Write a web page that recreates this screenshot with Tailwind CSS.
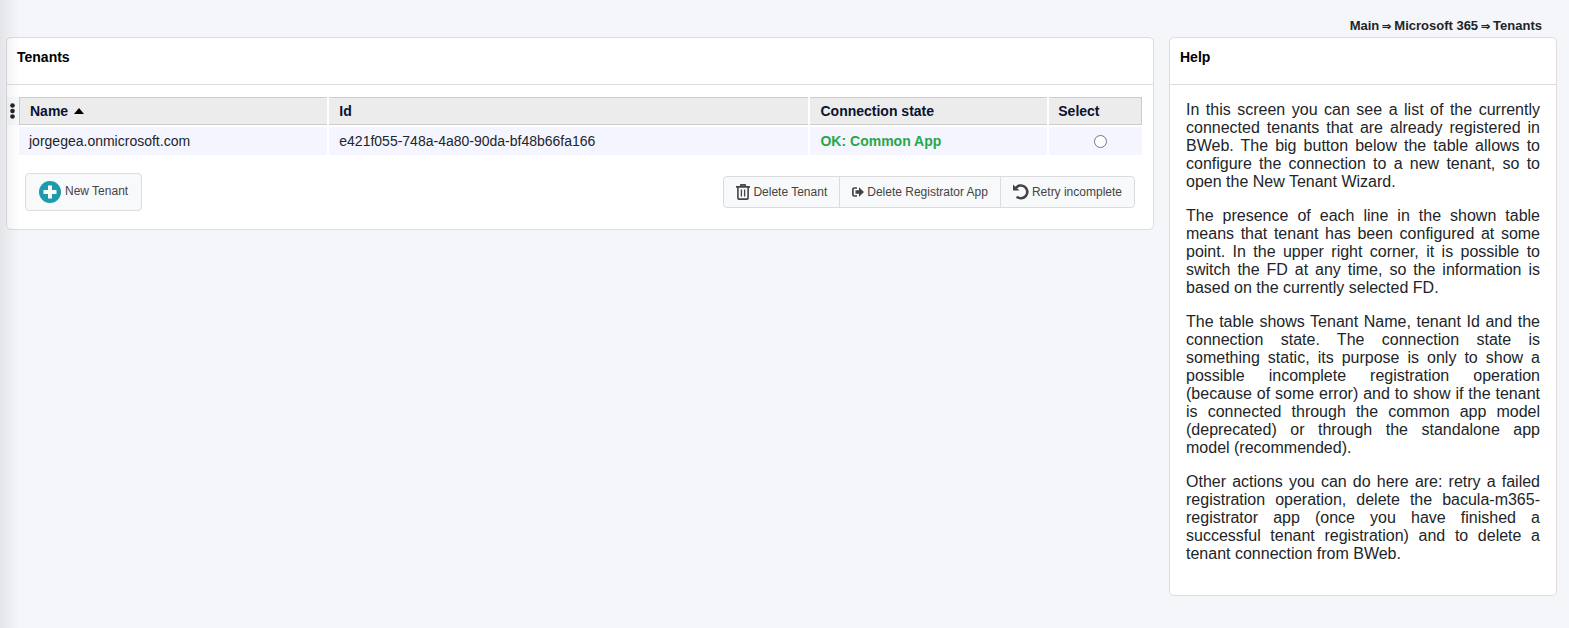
<!DOCTYPE html>
<html lang="en">
<head>
  <meta charset="UTF-8">
  <meta name="viewport" content="width=device-width, initial-scale=1.0">
  <title>Tenants</title>
  <script src="https://cdn.jsdelivr.net/npm/@tailwindcss/browser@4"></script>
</head>
<body class="relative min-h-screen bg-[#f4f6fa] pl-[6px] pr-3 pt-4 font-['Liberation_Sans',Arial,sans-serif] text-[#212529]">

  <!-- shadow cast by the sidebar -->
  <div class="absolute inset-y-0 left-0 w-5 bg-linear-to-r from-black/7 to-transparent pointer-events-none"></div>

  <nav class="flex justify-end gap-[3px] pr-[15px] pb-[1px] text-[13px] leading-5 font-bold" aria-label="Breadcrumb">
    <a href="#">Main</a>
    <span class="text-[11px]">⇒</span>
    <a href="#">Microsoft 365</a>
    <span class="text-[11px]">⇒</span>
    <a href="#">Tenants</a>
  </nav>

  <main class="flex items-start gap-[15px]">
    <section class="flex-1 min-w-0 bg-white border border-[#e0dbdd] rounded-[5px]">
      <h2 class="h-[47px] pt-[9px] px-[10px] border-b border-[#e0dbdd] text-sm leading-5 font-bold text-black">Tenants</h2>

      <div class="flex items-start pt-[10px] pr-[9px]">
        <button type="button" class="w-3 h-7 mt-0.5 -mr-0.5 shrink-0 flex items-center justify-center bg-[#f8f9fa]" aria-label="Table options">
          <svg class="w-[6px] h-4" viewBox="0 0 6 16" fill="#212529">
            <circle cx="2.5" cy="2.5" r="2.3"/>
            <circle cx="2.5" cy="8" r="2.3"/>
            <circle cx="2.5" cy="13.5" r="2.3"/>
          </svg>
        </button>
        <table class="flex-1 table-fixed w-full border-separate border-spacing-0.5 text-sm leading-5">
          <thead>
            <tr class="h-7 text-left text-[#0b1330]">
              <th class="w-[27.6%] px-[10px] py-0 bg-[#ececec] border-y border-l border-[#ccc]">
                <span class="flex items-center gap-[6px]">Name
                  <svg class="w-[10px] h-[6px]" viewBox="0 0 10 6" fill="#000"><path d="M5 0l5 6H0z"/></svg>
                </span>
              </th>
              <th class="w-[42.9%] px-[10px] py-0 bg-[#ececec] border-y border-[#ccc]">Id</th>
              <th class="w-[21.2%] px-[10px] py-0 bg-[#ececec] border-y border-[#ccc]">Connection state</th>
              <th class="px-[9px] py-0 bg-[#ececec] border-y border-r border-[#ccc]">Select</th>
            </tr>
          </thead>
          <tbody>
            <tr class="h-7">
              <td class="px-[10px] py-0 bg-[#f4f5ff]">jorgegea.onmicrosoft.com</td>
              <td class="px-[10px] py-0 bg-[#f4f5ff]">e421f055-748a-4a80-90da-bf48b66fa166</td>
              <td class="px-[10px] py-0 bg-[#f4f5ff] font-bold text-[#28a745]">OK: Common App</td>
              <td class="pl-[10px] py-0 bg-[#f4f5ff]">
                <input type="radio" name="tenant" class="block w-[13px] h-[13px] mx-auto" aria-label="Select jorgegea.onmicrosoft.com">
              </td>
            </tr>
          </tbody>
        </table>
      </div>

      <div class="flex items-center justify-between pt-4 pb-[18px] px-[18px] text-xs text-[#444]">
        <button type="button" class="h-[38px] px-[13px] flex items-center gap-1 bg-[#f8f9fa] border border-[#dcdcdf] rounded">
          <svg class="w-[22px] h-[22px]" viewBox="0 0 22 22">
            <circle cx="11" cy="11" r="11" fill="#1d9bab"/>
            <path d="M9 4.5h4V9h4.500v4H13v4.500H9V13H4.500V9H9z" fill="#fff"/>
          </svg>
          <span class="pb-0.5">New Tenant</span>
        </button>

        <div class="flex" role="group">
          <button type="button" class="h-8 px-3 flex items-center gap-[3px] bg-[#f8f9fa] border border-[#dcdcdf] rounded-l">
            <svg class="w-[14px] h-4" viewBox="0 0 14 16" fill="none" stroke="#444" stroke-width="1.600">
              <path d="M0 2.900h14M4.300 2.800L5 .9h4l.7 1.900M1.900 3.500V14q0 1.100 1 1.100h8.200q1 0 1-1.100V3.500"/>
              <path d="M5.400 5.500v7M8.600 5.500v7" stroke-width="1.300"/>
            </svg>
            <span>Delete Tenant</span>
          </button>
          <button type="button" class="h-8 px-3 -ml-px flex items-center gap-[3px] bg-[#f8f9fa] border border-[#dcdcdf]">
            <svg class="w-3 h-[10px]" viewBox="0 0 12 10">
              <path d="M5 1H2.500Q.9 1 .9 2.500v5Q.9 9 2.500 9H5" fill="none" stroke="#444" stroke-width="1.700"/>
              <path d="M3.500 3.200H7V.3L12 5 7 9.700V6.800H3.500z" fill="#444"/>
            </svg>
            <span>Delete Registrator App</span>
          </button>
          <button type="button" class="h-8 px-3 -ml-px flex items-center gap-[3px] bg-[#f8f9fa] border border-[#dcdcdf] rounded-r">
            <svg class="w-4 h-4" viewBox="0 0 16 16">
              <path d="M2.600 4.300A6.400 6.400 0 1 1 3.700 12.700" fill="none" stroke="#444" stroke-width="2.600"/>
              <path d="M0 .6L2 2.400 6.500 6.500H0z" fill="#444"/>
            </svg>
            <span>Retry incomplete</span>
          </button>
        </div>
      </div>
    </section>

    <aside class="w-[388px] shrink-0 bg-white border border-[#e0dbdd] rounded-[5px]">
      <h2 class="h-[47px] pt-[9px] px-[10px] border-b border-[#e0dbdd] text-sm leading-5 font-bold text-black">Help</h2>
      <div class="px-4 pt-4 pb-8 space-y-4 text-base leading-[18px] text-justify">
        <p>In this screen you can see a list of the currently connected tenants that are already registered in BWeb. The big button below the table allows to configure the connection to a new tenant, so to open the New Tenant Wizard.</p>
        <p>The presence of each line in the shown table means that tenant has been configured at some point. In the upper right corner, it is possible to switch the FD at any time, so the information is based on the currently selected FD.</p>
        <p>The table shows Tenant Name, tenant Id and the connection state. The connection state is something static, its purpose is only to show a possible incomplete registration operation (because of some error) and to show if the tenant is connected through the common app model (deprecated) or through the standalone app model (recommended).</p>
        <p>Other actions you can do here are: retry a failed registration operation, delete the bacula-m365-registrator app (once you have finished a successful tenant registration) and to delete a tenant connection from BWeb.</p>
      </div>
    </aside>
  </main>

</body>
</html>
